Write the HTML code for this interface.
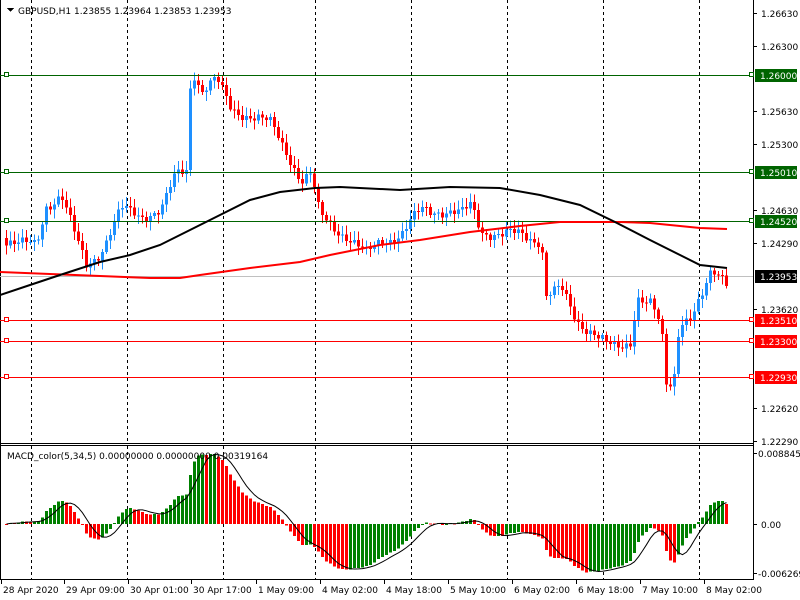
<!DOCTYPE html>
<html><head><meta charset="utf-8">
<style>
html,body{margin:0;padding:0;background:#fff;width:800px;height:600px;overflow:hidden}
svg{display:block}
text{font-family:"DejaVu Sans","Liberation Sans",sans-serif;font-size:9px;fill:#000}
</style></head><body>
<svg id="s" width="800" height="600" xmlns="http://www.w3.org/2000/svg" shape-rendering="crispEdges"></svg>
<script>
var s=document.getElementById('s'),h='';
function L(x1,y1,x2,y2,c,w,d){h+='<line x1="'+x1+'" y1="'+y1+'" x2="'+x2+'" y2="'+y2+'" stroke="'+c+'" stroke-width="'+(w||1)+'"'+(d?' stroke-dasharray="'+d+'"':'')+'/>';}
function R(x,y,w,hh,c){h+='<rect x="'+x+'" y="'+y+'" width="'+w+'" height="'+hh+'" fill="'+c+'"/>';}
function T(x,y,t,c,a){h+='<text x="'+x+'" y="'+y+'"'+(c?' style="fill:'+c+'"':'')+(a?' text-anchor="'+a+'"':'')+'>'+t+'</text>';}
// vertical dashed grid
[31,127,223,315,411,507,603,699].forEach(function(x){L(x+.5,0,x+.5,443,'#000',1,'3,3');L(x+.5,446,x+.5,579,'#000',1,'3,3');});
// axes frame
L(753.5,0,753.5,580,'#000');L(0,443.5,753,443.5,'#000');L(0,445.5,753,445.5,'#000');L(0,579.5,753,579.5,'#000');
L(0.5,0,0.5,580,'#000');
// price ticks
var pl=[[13,'1.26630'],[46,'1.26300'],[111,'1.25630'],[144,'1.25300'],[210,'1.24630'],[243,'1.24290'],[309,'1.23620'],[408,'1.22620'],[441,'1.22290']];
pl.forEach(function(p){L(754,p[0]+.5,757,p[0]+.5,'#000');T(761,p[0]+4,p[1]);});
// current price line
L(0,276.5,753,276.5,'#c0c0c0');
// control points close
var cp=[[5,240],[20,245],[35,245],[45,205],[60,195],[75,240],[85,265],[100,250],[120,210],[140,215],[160,210],[175,175],[185,170],[190,65],[200,90],[215,80],[230,110],[250,115],[270,125],[290,160],[300,180],[310,175],[318,215],[330,225],[345,235],[365,255],[380,240],[400,235],[420,210],[440,210],[460,215],[470,205],[480,230],[500,235],[520,235],[540,240],[545,295],[560,290],[575,320],[590,330],[605,345],[615,350],[630,340],[635,295],[650,305],[660,330],[665,385],[672,385],[678,320],[690,315],[700,300],[710,275],[720,275],[728,282]];
function iv(x){for(var i=1;i<cp.length;i++){if(x<=cp[i][0]){var a=cp[i-1],b=cp[i];return a[1]+(b[1]-a[1])*(x-a[0])/(b[0]-a[0]);}}return cp[cp.length-1][1];}
var cl=[],xs=[],prev=238;
for(var x=5;x<=728;x+=4){var c=iv(x)+Math.sin(x*1.7)*5+Math.sin(x*0.53)*3;xs.push(x);cl.push(c);
 var o=prev,hi=Math.min(o,c)-2-Math.abs(Math.sin(x*2.3))*7,lo=Math.max(o,c)+2+Math.abs(Math.cos(x*1.9))*7;
 var up=c<o,col=up?'#1e90ff':'#ff0000';
 L(x+1.5,hi,x+1.5,lo,col);R(x,Math.min(o,c),3,Math.max(1,Math.abs(o-c)),col);prev=c;}
// horizontal levels
[[75,'#006400','1.26000'],[172,'#006400','1.25010'],[221,'#006400','1.24520'],[320,'#ff0000','1.23510'],[341,'#ff0000','1.23300'],[377,'#ff0000','1.22930']].forEach(function(l){
 L(0,l[0]+.5,753,l[0]+.5,l[1]);h+='<rect x="4.5" y="'+(l[0]-2.5)+'" width="4" height="4" fill="#fff" stroke="'+l[1]+'"/>';
 h+='<rect x="749.5" y="'+(l[0]-2.5)+'" width="4" height="4" fill="#fff" stroke="'+l[1]+'"/>';
 R(755,l[0]-6,42,13,l[1]);T(760,l[0]+4,l[2],'#fff');});
R(755,270,42,13,'#000');T(760,280,'1.23953','#fff');
// MAs
function PL(pts,c,w){h+='<polyline fill="none" stroke="'+c+'" stroke-width="'+w+'" shape-rendering="auto" points="'+pts.map(function(p){return p.join(',')}).join(' ')+'"/>';}
PL([[0,272],[50,274],[100,276],[150,278],[180,278],[200,275],[250,268],[300,262],[330,255],[380,245],[420,240],[470,232],[520,226],[560,222],[620,222],[650,223],[700,228],[727,229]],'#ff0000',2);
PL([[0,295],[30,285],[60,275],[100,262],[130,255],[160,245],[190,230],[220,215],[250,200],[280,192],[315,188],[340,187],[400,190],[450,187],[500,188],[540,195],[580,205],[615,222],[650,240],[680,255],[700,265],[727,268]],'#000',2);
// MACD
function ema(a,n){var k=2/(n+1),r=[],e=a[0];a.forEach(function(v){e=v*k+e*(1-k);r.push(e);});return r;}
var f=ema(cl,5),sl=ema(cl,34),m=cl.map(function(_,i){return sl[i]-f[i];});
var mx=Math.max.apply(0,m),mn=Math.min.apply(0,m),sc=Math.min(70/mx,50/(-mn)),z=524;
var sig=[];m.forEach(function(v,i){var t=0,n=0;for(var j=Math.max(0,i-4);j<=i;j++){t+=m[j];n++;}sig.push(t/n);});
m.forEach(function(v,i){var y=z-v*sc,col=(i>0&&v>=m[i-1])?'#008000':'#ff0000';R(xs[i],Math.min(y,z),3,Math.max(1,Math.abs(y-z)),col);});
h+='<polyline fill="none" stroke="#000" stroke-width="1" shape-rendering="auto" points="'+sig.map(function(v,i){return (xs[i]+1.5)+','+(z-v*sc)}).join(' ')+'"/>';
L(754,453.5,757,453.5,'#000');T(758,457,'0.0088457');L(754,524.5,757,524.5,'#000');T(761,528,'0.00');L(754,573.5,757,573.5,'#000');T(758,577,'-0.006269');
T(7,459,'MACD_color(5,34,5) 0.00000000 0.00000000 0.00319164');
// title
h+='<polygon points="7,8 14,8 10.5,12" fill="#000"/>';T(18,14,'GBPUSD,H1  1.23855 1.23964 1.23853 1.23953');
// time axis
[[3,'28 Apr 2020'],[66,'29 Apr 09:00'],[130,'30 Apr 01:00'],[193,'30 Apr 17:00'],[258,'1 May 09:00'],[322,'4 May 02:00'],[386,'4 May 18:00'],[450,'5 May 10:00'],[514,'6 May 02:00'],[578,'6 May 18:00'],[642,'7 May 10:00'],[706,'8 May 02:00']].forEach(function(t){L(t[0]-1.5,580,t[0]-1.5,584,'#000');T(t[0],593,t[1]);});
s.innerHTML=h;
</script>
</body></html>
